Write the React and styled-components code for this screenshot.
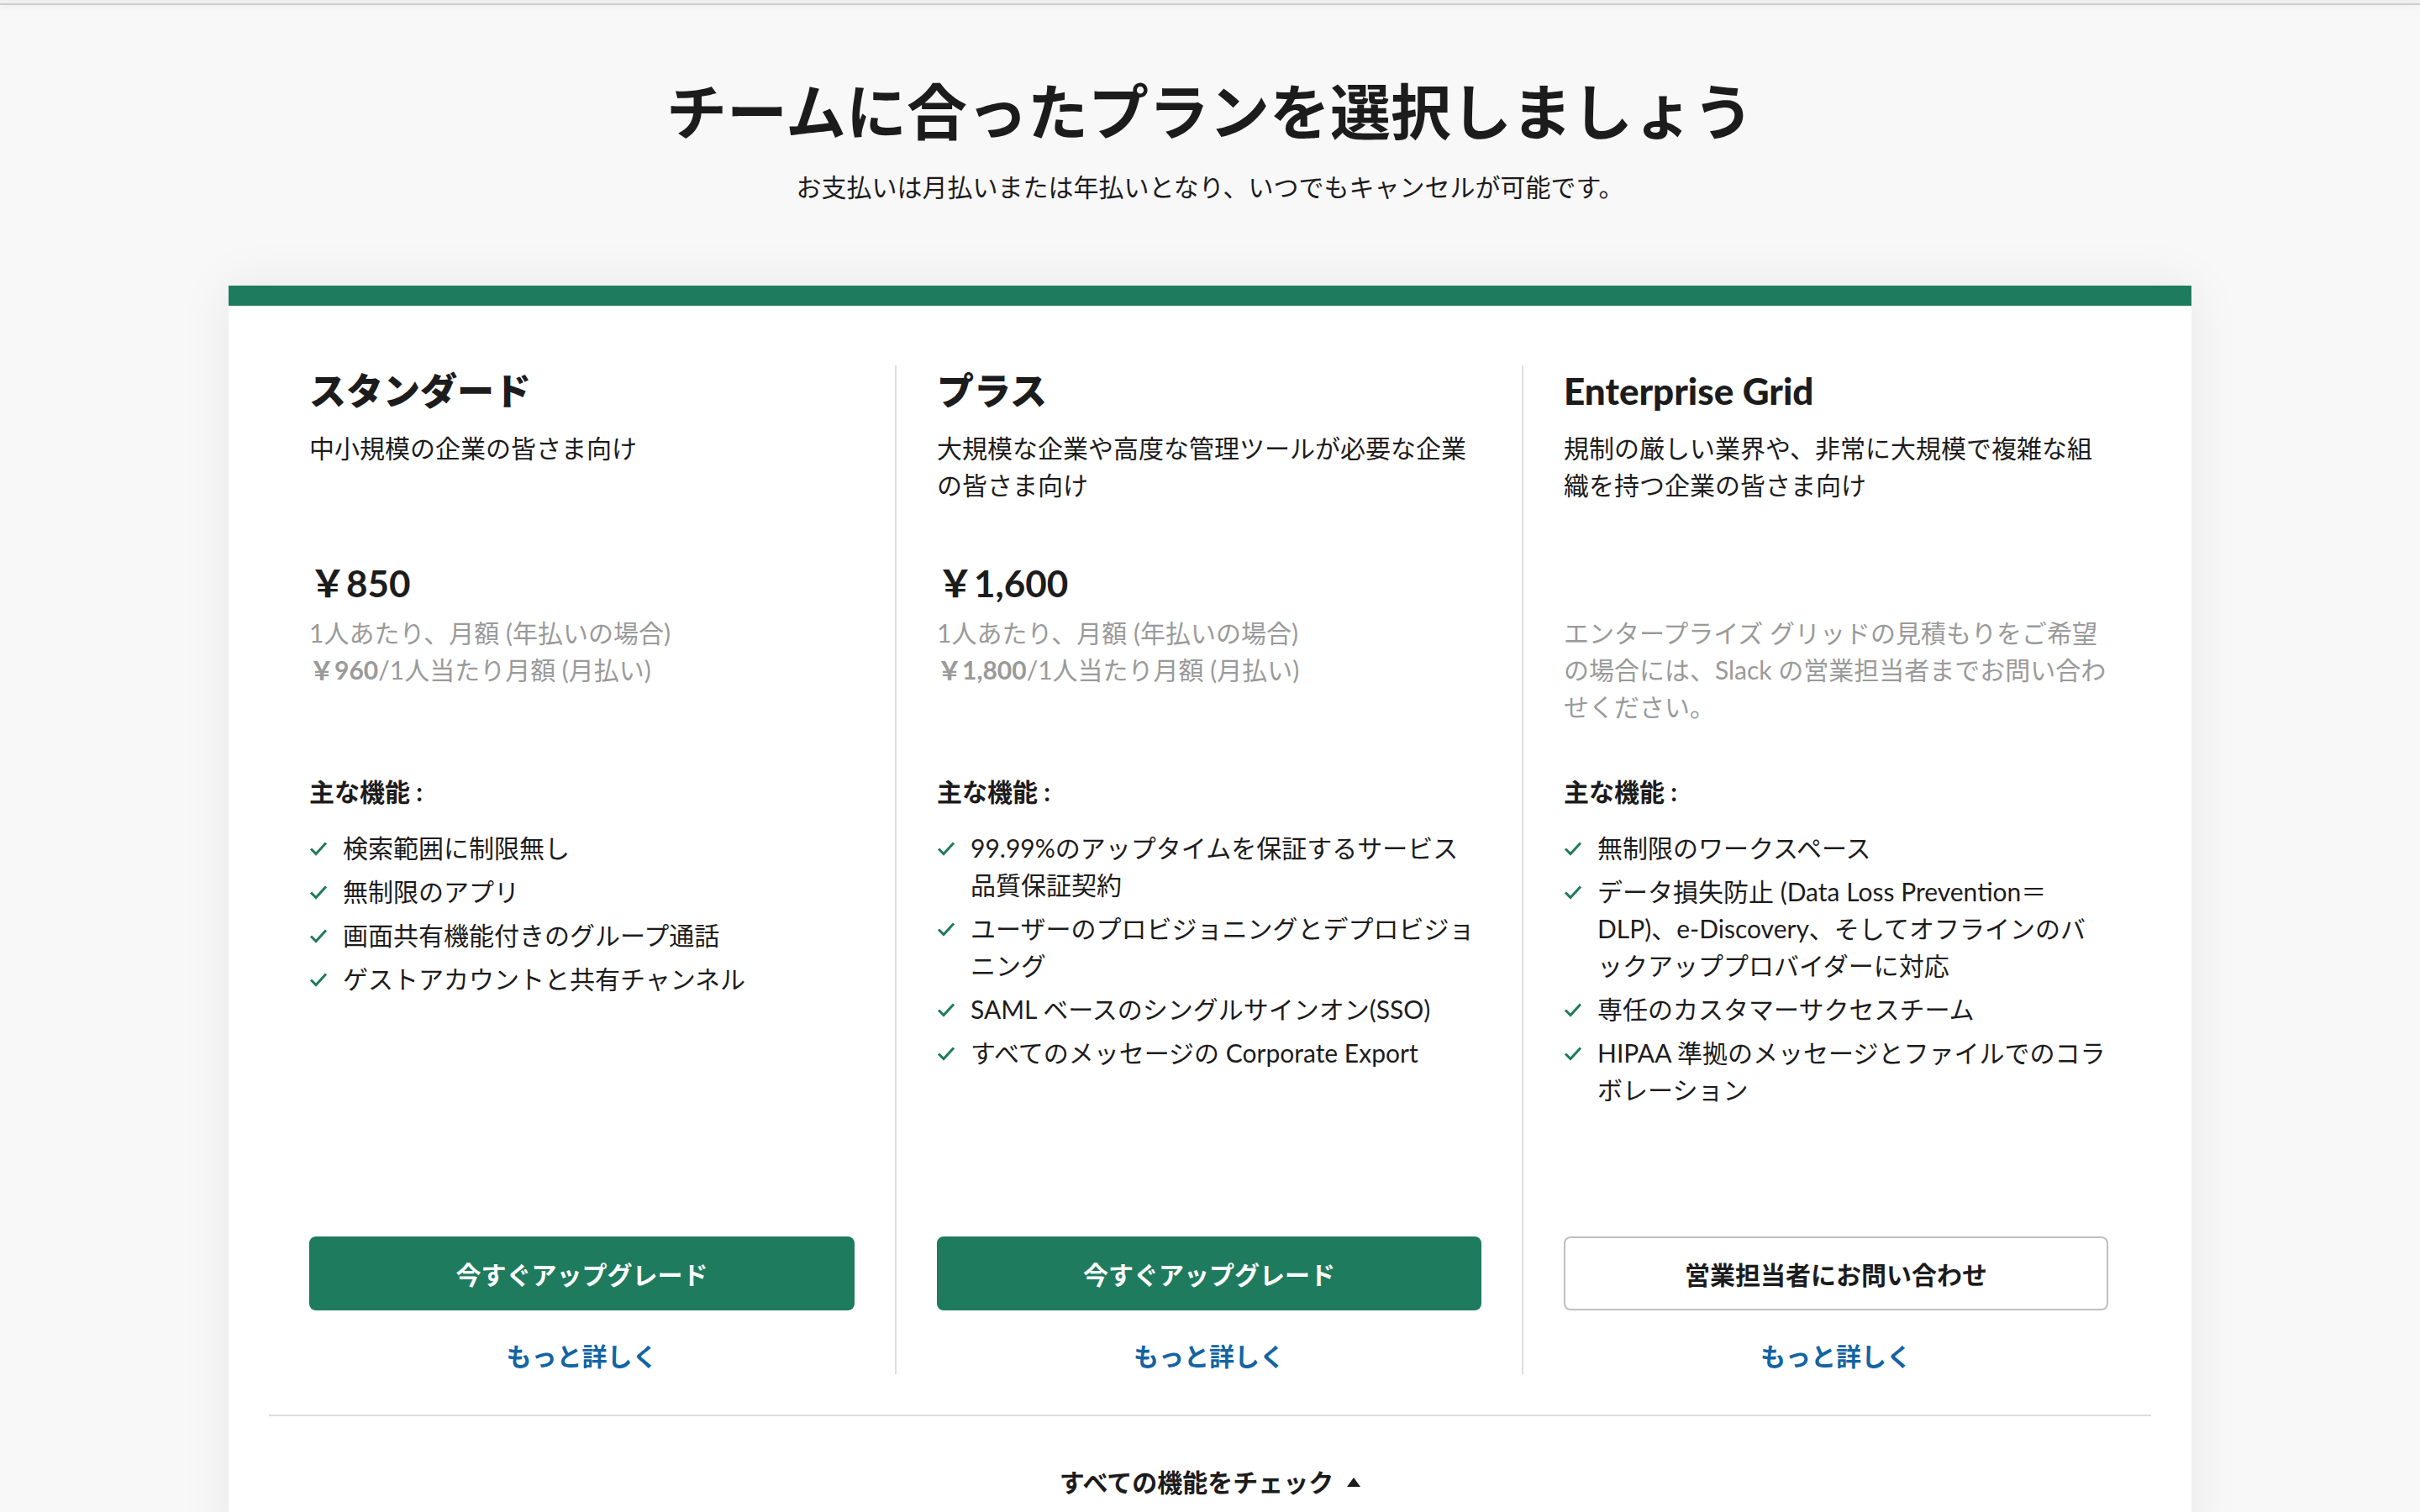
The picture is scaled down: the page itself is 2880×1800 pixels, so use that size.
import React from 'react'
import styled, { createGlobalStyle } from 'styled-components'

const GlobalStyle = createGlobalStyle`
  html, body {
    margin: 0;
    padding: 0;
    background: #f8f8f8;
  }
  body {
    font-family: Lato, "Noto Sans CJK JP", sans-serif;
    color: #1d1c1d;
    -webkit-font-smoothing: antialiased;
  }
  * {
    box-sizing: border-box;
  }
`

const plans = [
  {
    name: 'スタンダード',
    desc: '中小規模の企業の皆さま向け',
    price: '￥850',
    notes: [
      { text: '1人あたり、月額 (年払いの場合)' },
      { amount: '￥960', text: '/1人当たり月額 (月払い)' }
    ],
    features: [
      '検索範囲に制限無し',
      '無制限のアプリ',
      '画面共有機能付きのグループ通話',
      'ゲストアカウントと共有チャンネル'
    ],
    cta: '今すぐアップグレード',
    primary: true
  },
  {
    name: 'プラス',
    desc: '大規模な企業や高度な管理ツールが必要な企業の皆さま向け',
    price: '￥1,600',
    notes: [
      { text: '1人あたり、月額 (年払いの場合)' },
      { amount: '￥1,800', text: '/1人当たり月額 (月払い)' }
    ],
    features: [
      '99.99%のアップタイムを保証するサービス品質保証契約',
      'ユーザーのプロビジョニングとデプロビジョニング',
      'SAML ベースのシングルサインオン(SSO)',
      'すべてのメッセージの Corporate Export'
    ],
    cta: '今すぐアップグレード',
    primary: true
  },
  {
    name: 'Enterprise Grid',
    desc: '規制の厳しい業界や、非常に大規模で複雑な組織を持つ企業の皆さま向け',
    price: null,
    notes: [
      { text: 'エンタープライズ グリッドの見積もりをご希望の場合には、Slack の営業担当者までお問い合わせください。' }
    ],
    features: [
      '無制限のワークスペース',
      'データ損失防止 (Data Loss Prevention＝DLP)、e-Discovery、そしてオフラインのバックアッププロバイダーに対応',
      '専任のカスタマーサクセスチーム',
      'HIPAA 準拠のメッセージとファイルでのコラボレーション'
    ],
    cta: '営業担当者にお問い合わせ',
    primary: false
  }
]

export default function App() {
  return (
    <Page>
      <GlobalStyle />
      <TopBar />
      <Hero>
        <Title>チームに合ったプランを選択しましょう</Title>
        <Subtitle>お支払いは月払いまたは年払いとなり、いつでもキャンセルが可能です。</Subtitle>
      </Hero>
      <Card>
        <Columns>
          {plans.map((plan, i) => (
            <Column key={plan.name} $divider={i > 0}>
              <PlanHeader>
                <PlanName>{plan.name}</PlanName>
                <PlanDesc>{plan.desc}</PlanDesc>
              </PlanHeader>
              <PriceBlock>
                <Price>{plan.price}</Price>
                {plan.notes.map((note, j) => (
                  <Note key={j}>
                    {note.amount && <strong>{note.amount}</strong>}
                    {note.text}
                  </Note>
                ))}
              </PriceBlock>
              <FeaturesTitle>主な機能 :</FeaturesTitle>
              <FeatureList>
                {plan.features.map((f) => (
                  <Feature key={f}>
                    <CheckIcon viewBox="0 0 22 18">
                      <path d="M2 9.5 L8 15.5 L20 2.5" />
                    </CheckIcon>
                    <span>{f}</span>
                  </Feature>
                ))}
              </FeatureList>
              <Actions>
                <Button $primary={plan.primary}>{plan.cta}</Button>
                <MoreLink href="#">もっと詳しく</MoreLink>
              </Actions>
            </Column>
          ))}
        </Columns>
        <CardFooter>
          <ToggleAll>
            すべての機能をチェック
            <svg width="16" height="11" viewBox="0 0 16 11">
              <path d="M8 0 L16 11 L0 11 Z" fill="#1d1c1d" />
            </svg>
          </ToggleAll>
        </CardFooter>
      </Card>
    </Page>
  )
}

const Page = styled.div`
  min-height: 100vh;
  background: #f8f8f8;
  overflow: hidden;
`

const TopBar = styled.div`
  height: 6px;
  background: #efefef;
  border-bottom: 2px solid #cdcdcd;
  box-shadow: 0 2px 8px rgba(0, 0, 0, 0.05);
`

const Hero = styled.header`
  padding-top: 79px;
  text-align: center;
`

const Title = styled.h1`
  margin: 0;
  font-size: 72px;
  line-height: 94px;
  font-weight: 700;
`

const Subtitle = styled.p`
  margin: 21px 0 0;
  font-size: 30px;
  line-height: 44px;
`

const Card = styled.section`
  width: 2336px;
  margin: 96px auto 0;
  background: #fff;
  border-top: 24px solid #1e7b5d;
  box-shadow: 0 0 60px rgba(0, 0, 0, 0.07);
`

const Columns = styled.div`
  display: grid;
  grid-template-columns: 745px 746px 746px;
  padding: 71px 48px 48px;
`

const Column = styled.div`
  display: flex;
  flex-direction: column;
  min-height: 1201px;
  padding: 0 48px;
  border-left: ${(p) => (p.$divider ? '2px solid #dddddd' : 'none')};
`

const PlanHeader = styled.div`
  min-height: 229px;
`

const PlanName = styled.h2`
  margin: 0;
  font-size: 44px;
  line-height: 60px;
  font-weight: 900;
`

const PlanDesc = styled.p`
  margin: 16px 0 0;
  font-size: 30px;
  line-height: 44px;
`

const PriceBlock = styled.div`
  min-height: 256px;
`

const Price = styled.div`
  height: 60px;
  font-size: 44px;
  line-height: 60px;
  font-weight: 700;
  margin-bottom: 7px;
`

const Note = styled.p`
  margin: 0;
  font-size: 30px;
  line-height: 44px;
  color: #9a9a9a;

  strong {
    font-weight: 700;
  }
`

const FeaturesTitle = styled.h3`
  margin: 0;
  font-size: 30px;
  line-height: 44px;
  font-weight: 700;
`

const FeatureList = styled.ul`
  list-style: none;
  margin: 23px 0 0;
  padding: 0;
  display: flex;
  flex-direction: column;
  gap: 8px;
`

const Feature = styled.li`
  display: flex;
  align-items: flex-start;
  font-size: 30px;
  line-height: 44px;
`

const CheckIcon = styled.svg`
  flex: none;
  width: 22px;
  height: 18px;
  margin: 14px 18px 0 0;
  fill: none;
  stroke: #1e7b5d;
  stroke-width: 3;
`

const Actions = styled.div`
  margin-top: auto;
  display: flex;
  flex-direction: column;
  align-items: center;
`

const Button = styled.button`
  width: 100%;
  height: 88px;
  border-radius: 8px;
  font-family: inherit;
  font-size: 30px;
  font-weight: 700;
  cursor: pointer;
  background: ${(p) => (p.$primary ? '#1e7b5d' : '#ffffff')};
  color: ${(p) => (p.$primary ? '#ffffff' : '#1d1c1d')};
  border: 2px solid ${(p) => (p.$primary ? '#1e7b5d' : '#bfbfbf')};
`

const MoreLink = styled.a`
  margin-top: 32px;
  font-size: 30px;
  line-height: 44px;
  font-weight: 700;
  color: #1264a3;
  text-decoration: none;
`

const CardFooter = styled.div`
  margin: 0 48px;
  border-top: 2px solid #dddddd;
  padding: 56px 0;
  text-align: center;
`

const ToggleAll = styled.button`
  display: inline-flex;
  align-items: center;
  gap: 16px;
  border: none;
  background: none;
  padding: 0;
  font-family: inherit;
  font-size: 30px;
  line-height: 44px;
  font-weight: 700;
  color: #1d1c1d;
  cursor: pointer;
`
